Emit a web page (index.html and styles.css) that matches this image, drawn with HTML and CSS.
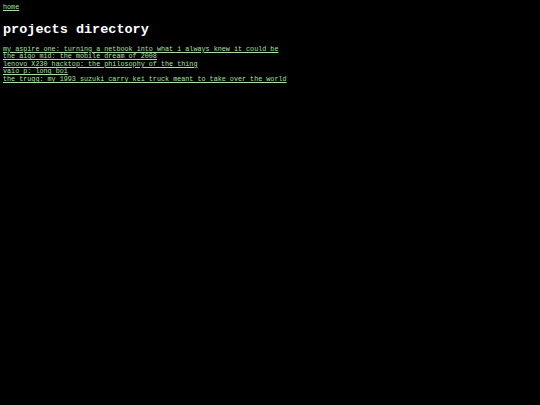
FILE: index.html
```html
<!DOCTYPE html>
<html>
<head>
<meta charset="utf-8">
<link rel="stylesheet" href="styles.css">
</head>
<body>
<nav class="top"><a href="#">home</a></nav>
<h1 class="title">projects directory</h1>
<ul class="list">
<li><a href="#">my aspire one: turning a netbook into what i always knew it could be</a></li>
<li><a href="#">the aigo mid: the mobile dream of 2008</a></li>
<li><a href="#">lenovo X230 hacktop: the philosophy of the thing</a></li>
<li><a href="#">vaio p: long boi</a></li>
<li><a href="#">the trugg: my 1993 suzuki carry kei truck meant to take over the world</a></li>
</ul>
</body>
</html>
```
FILE: styles.css
```css
html, body {
  background: #000;
}
body {
  margin: 0;
  padding: 4px 3px;
  color: #fff;
  font-family: "Liberation Mono", "DejaVu Sans Mono", monospace;
  font-size: 6.75px;
  line-height: 7.6px;
}
a {
  color: #a8e0a0;
}
.top {
  margin: 0;
}
.title {
  font-size: 13.5px;
  line-height: 16px;
  margin: 10px 0 8px;
  font-weight: bold;
}
.list {
  list-style: none;
  margin: 0;
  padding: 0;
}
```
